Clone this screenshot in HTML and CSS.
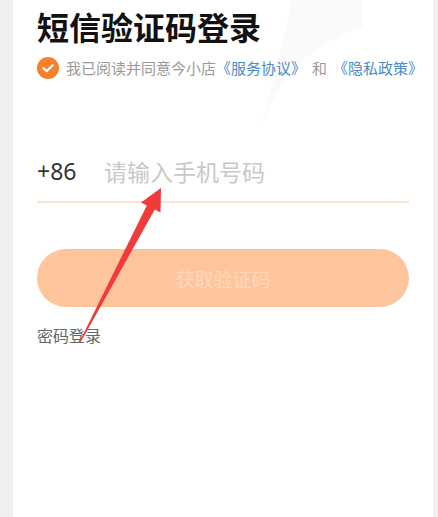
FILE: index.html
```html
<!DOCTYPE html>
<html lang="zh-CN">
<head>
<meta charset="utf-8">
<title>短信验证码登录</title>
<link rel="stylesheet" href="styles.css">
</head>
<body>
<div class="page">
  <svg class="deco" width="160" height="140" viewBox="0 0 160 140">
    <path d="M78,0 C72,40 60,85 48,128 C62,90 80,60 120,40 C135,32 145,28 150,26 L150,0 Z" fill="#fafafa"/>
  </svg>
  <div class="content">
    <h1 class="title">短信验证码登录</h1>
    <div class="agree">
      <span class="check">
        <svg width="22" height="22" viewBox="0 0 22 22"><path d="M6.5,11.2 L9.7,14.2 L15.6,8.2" fill="none" stroke="#fff" stroke-width="2.2" stroke-linecap="round" stroke-linejoin="round"/></svg>
      </span>
      <span class="agree-text">我已阅读并同意今小店<span class="link">《服务协议》</span><span class="and">和</span><span class="link">《隐私政策》</span></span>
    </div>
    <div class="phone-row">
      <span class="code">+86</span>
      <span class="placeholder">请输入手机号码</span>
    </div>
    <div class="btn">获取验证码</div>
    <div class="pwd-login">密码登录</div>
  </div>
</div>
<svg class="arrow" width="438" height="517" viewBox="0 0 438 517">
  <polygon points="161,188 160.5,212.6 154.8,209.6 80.6,342.2 79.6,341.8 146.8,205.4 141,202.4" fill="#f23a3a"/>
</svg>
</body>
</html>
```
FILE: styles.css
```css
html, body {
  margin: 0;
  padding: 0;
}
body {
  background: #efefef;
  height: 517px;
  overflow: hidden;
  position: relative;
  font-family: "Noto Sans CJK SC", "Noto Sans", sans-serif;
}
.page {
  margin-left: 13px;
  width: 420px;
  height: 517px;
  background: #ffffff;
  position: relative;
}
.deco {
  position: absolute;
  left: 200px;
  top: 0;
}
.content {
  position: relative;
  padding: 10px 24px 0 24px;
}
.title {
  margin: 0;
  font-size: 32px;
  line-height: 32px;
  font-weight: 700;
  color: #111;
}
.agree {
  display: flex;
  align-items: center;
  margin-top: 15px;
  height: 22px;
  font-size: 15px;
  color: #9a9a9a;
  white-space: nowrap;
}
.check {
  width: 22px;
  height: 22px;
  border-radius: 50%;
  background: #f7812a;
  display: flex;
  flex: none;
}
.agree-text {
  margin-left: 7px;
  line-height: 22px;
}
.link {
  color: #4a8bc8;
}
.and {
  margin: 0 6px;
}
.phone-row {
  margin-top: 62px;
  height: 60px;
  display: flex;
  align-items: center;
  border-bottom: 2px solid #fde3d0;
}
.code {
  width: 67px;
  font-family: "Noto Sans", sans-serif;
  font-size: 23px;
  color: #333;
}
.placeholder {
  font-size: 23px;
  color: #c9c9c9;
}
.btn {
  margin-top: 46px;
  height: 58px;
  border-radius: 29px;
  background: #fec59c;
  display: flex;
  align-items: center;
  justify-content: center;
  font-size: 19px;
  color: #fed9be;
}
.pwd-login {
  margin-top: 17px;
  font-size: 16px;
  line-height: 22px;
  color: #666;
}
.arrow {
  position: absolute;
  left: 0;
  top: 0;
  pointer-events: none;
}
```
